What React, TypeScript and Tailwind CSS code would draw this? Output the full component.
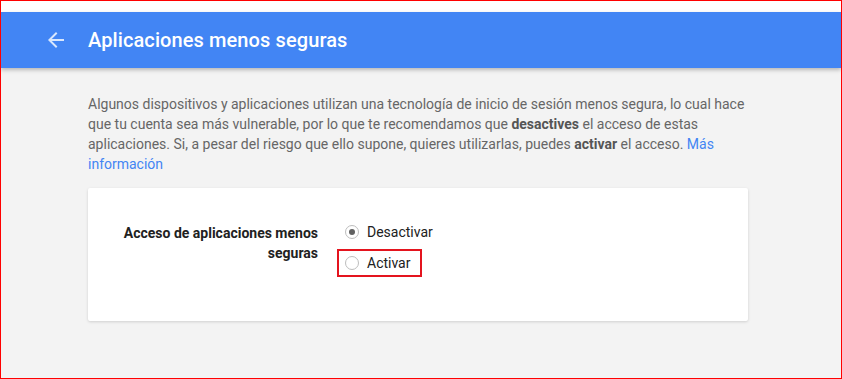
import { useState } from 'react';

// === LESS SECURE APPS SETTINGS PAGE ===
const font = { fontFamily: 'Roboto, "Liberation Sans", Arial, sans-serif' };

const Radio = ({ checked }: { checked: boolean }) => (
  <span className="w-[14px] h-[14px] rounded-full border border-[#bdbdbd] bg-white flex items-center justify-center shrink-0">
    {checked && <span className="w-[6px] h-[6px] rounded-full bg-[#616161]" />}
  </span>
);

export default function App() {
  const [value, setValue] = useState<'off' | 'on'>('off');

  return (
    <div
      style={font}
      className="w-[842px] h-[379px] border border-[#ff0000] bg-[#f3f3f3] overflow-hidden flex flex-col"
    >
      {/* white strip above the bar */}
      <div className="h-[11px] bg-white shrink-0" />

      {/* === HEADER === */}
      <header className="h-[56px] shrink-0 bg-[#4285f4] flex items-center shadow-[0_2px_4px_rgba(0,0,0,0.25)] relative z-10">
        <button className="ml-[43px] w-6 h-6 flex items-center justify-center text-white/80">
          <svg width="24" height="24" viewBox="0 0 24 24" fill="currentColor">
            <path d="M20 11H7.83l5.59-5.59L12 4l-8 8 8 8 1.41-1.41L7.83 13H20v-2z" />
          </svg>
        </button>
        <h1 className="ml-[20px] text-[20px] font-medium text-white tracking-[0.1px]">
          Aplicaciones menos seguras
        </h1>
      </header>

      {/* === CONTENT === */}
      <main className="pl-[87px] pt-[26px]">
        <p className="w-[662px] text-[14px] leading-[20px] text-[#666666]">
          Algunos dispositivos y aplicaciones utilizan una tecnología de inicio de sesión menos segura, lo cual hace
          que tu cuenta sea más vulnerable, por lo que te recomendamos que{' '}
          <b className="font-bold text-[#555555]">desactives</b> el acceso de estas aplicaciones. Si, a pesar del
          riesgo que ello supone, quieres utilizarlas, puedes <b className="font-bold text-[#555555]">activar</b> el
          acceso. <a className="text-[#4285f4]">Más información</a>
        </p>

        <section className="mt-[14px] w-[660px] h-[133px] bg-white rounded-[2px] shadow-[0_1px_3px_rgba(0,0,0,0.15)] flex pt-[34px]">
          <div className="w-[230px] pt-[1px] text-right text-[14px] leading-[20px] font-bold text-[#212121]">
            Acceso de aplicaciones menos
            <br />
            seguras
          </div>

          <div className="ml-[26px] -mt-[4px] flex flex-col">
            <label
              onClick={() => setValue('off')}
              className="h-[28px] flex items-center gap-[8px] pl-[1px] text-[14px] text-[#212121] cursor-pointer"
            >
              <Radio checked={value === 'off'} />
              Desactivar
            </label>
            <label
              onClick={() => setValue('on')}
              className="mt-[3px] -ml-[7px] w-[85px] h-[28px] border-[2px] border-[#e4141e] flex items-center gap-[8px] pl-[6px] text-[14px] text-[#212121] cursor-pointer"
            >
              <Radio checked={value === 'on'} />
              Activar
            </label>
          </div>
        </section>
      </main>
    </div>
  );
}
